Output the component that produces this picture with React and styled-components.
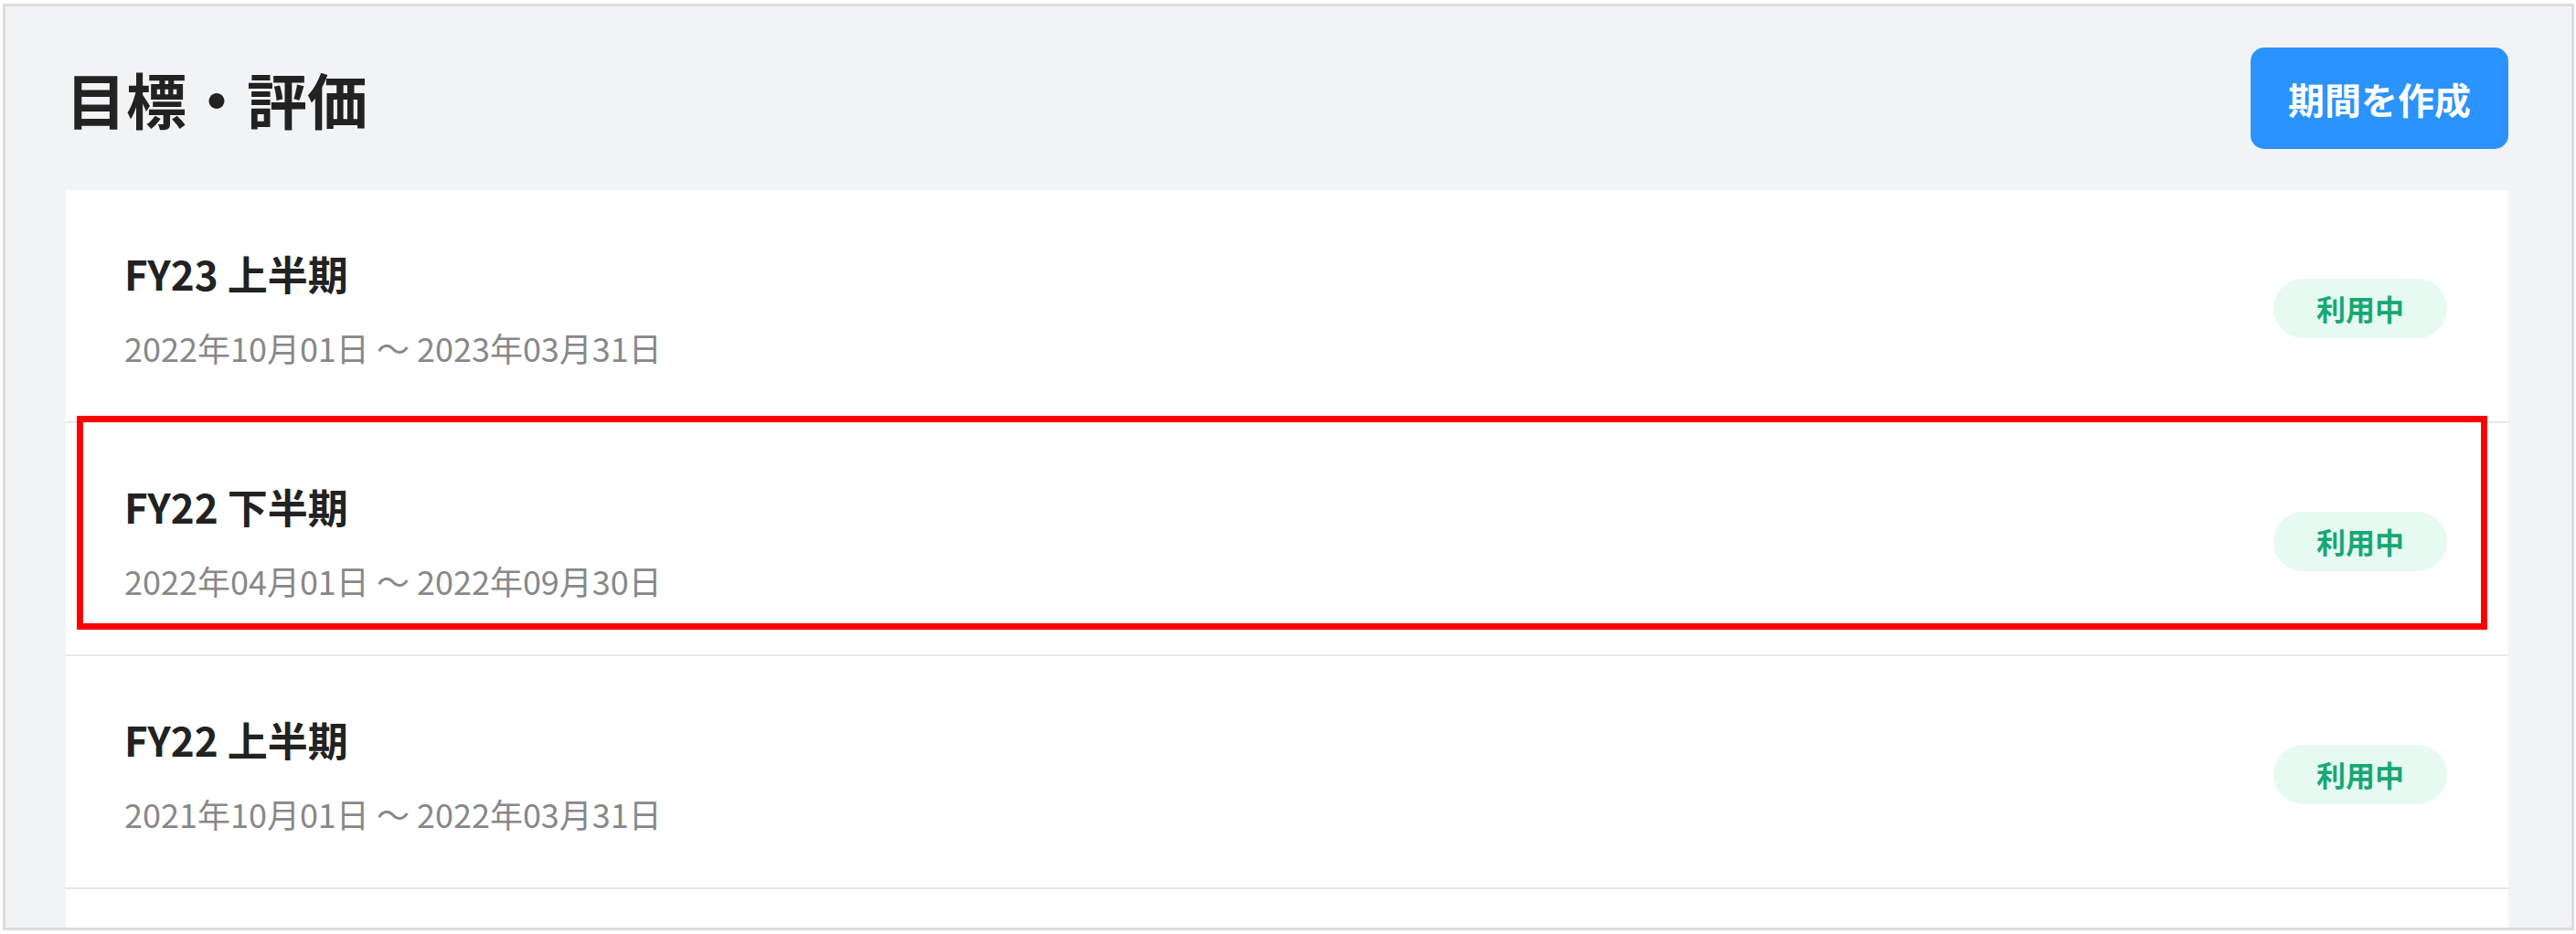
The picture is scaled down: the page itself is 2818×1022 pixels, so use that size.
import React from "react";
import styled, { createGlobalStyle } from "styled-components";

const GlobalStyle = createGlobalStyle`
  html, body {
    margin: 0;
    background: #ffffff;
    font-family: "Noto Sans CJK JP", "Noto Sans", sans-serif;
  }
`;

const Frame = styled.div`
  box-sizing: border-box;
  margin: 4px 0 0 3px;
  width: 2813px;
  height: 1014px;
  border: 3px solid #dcdcdc;
  background: #f2f3f5;
  padding: 0 69px 0 66px;
  display: flex;
  flex-direction: column;
  overflow: hidden;
`;

const Header = styled.header`
  height: 201px;
  flex-shrink: 0;
  display: flex;
  align-items: center;
  justify-content: space-between;
`;

const PageTitle = styled.h1`
  margin: 0;
  font-size: 66px;
  font-weight: 700;
  line-height: 1.2;
  color: #222222;
`;

const CreateButton = styled.button`
  width: 282px;
  height: 111px;
  border: none;
  border-radius: 15px;
  background: #2b93fd;
  color: #ffffff;
  font-family: inherit;
  font-size: 40px;
  font-weight: 700;
  cursor: pointer;
`;

const Card = styled.div`
  flex: 1;
  background: #ffffff;
  overflow: hidden;
`;

const Row = styled.div`
  position: relative;
  box-sizing: border-box;
  height: 255px;
  padding: 6px 67px 0 64px;
  border-bottom: 2px solid #e4e7eb;
  display: flex;
  align-items: center;
  justify-content: space-between;
`;

const Info = styled.div`
  display: flex;
  flex-direction: column;
`;

const PeriodName = styled.div`
  font-size: 44px;
  font-weight: 700;
  line-height: 57px;
  color: #222222;
`;

const PeriodDates = styled.div`
  margin-top: 28px;
  font-size: 36px;
  line-height: 49px;
  color: #888888;
`;

const StatusBadge = styled.span`
  height: 65px;
  padding: 0 47px;
  border-radius: 33px;
  background: #e6faf2;
  color: #17a873;
  font-size: 32px;
  font-weight: 700;
  line-height: 65px;
`;

const Highlight = styled.div`
  position: absolute;
  top: -8px;
  left: 12px;
  right: 23px;
  bottom: 27px;
  border: 7px solid #ff0000;
  pointer-events: none;
`;

const periods = [
  { name: "FY23 上半期", range: "2022年10月01日 ～ 2023年03月31日" },
  { name: "FY22 下半期", range: "2022年04月01日 ～ 2022年09月30日", marked: true },
  { name: "FY22 上半期", range: "2021年10月01日 ～ 2022年03月31日" },
];

export default function App() {
  return (
    <>
      <GlobalStyle />
      <Frame>
        <Header>
          <PageTitle>目標・評価</PageTitle>
          <CreateButton>期間を作成</CreateButton>
        </Header>
        <Card>
          {periods.map((p) => (
            <Row key={p.name}>
              <Info>
                <PeriodName>{p.name}</PeriodName>
                <PeriodDates>{p.range}</PeriodDates>
              </Info>
              <StatusBadge>利用中</StatusBadge>
              {p.marked && <Highlight />}
            </Row>
          ))}
        </Card>
      </Frame>
    </>
  );
}
